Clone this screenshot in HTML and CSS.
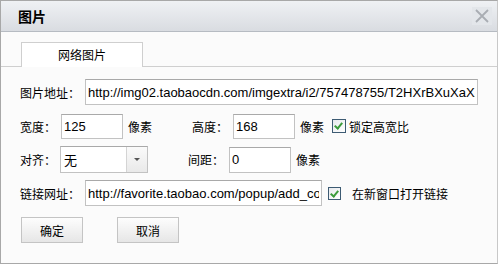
FILE: index.html
```html
<!DOCTYPE html>
<html lang="zh-CN">
<head>
  <meta charset="UTF-8" />
  <title>图片</title>
  <link rel="stylesheet" href="styles.css">
</head>
<body>
  <div class="dialog">
    <div class="titlebar">
      <span class="title">图片</span>
      <span class="close">
        <svg width="16" height="14" viewBox="0 0 16 14">
          <path d="M2 1 L14 13 M14 1 L2 13" stroke="#a9adb3" stroke-width="1.8" fill="none"/>
        </svg>
      </span>
    </div>

    <div class="tabs">
      <div class="tab">网络图片</div>
    </div>

    <div class="form">
      <div class="row row-url">
        <span class="label label-wide">图片地址：</span>
        <input class="input input-url" type="text" value="http://img02.taobaocdn.com/imgextra/i2/757478755/T2HXrBXuXaXXXXXXXX">
      </div>

      <div class="row row-size">
        <span class="label">宽度：</span>
        <input class="input input-num" type="text" value="125">
        <span class="unit">像素</span>
        <span class="label label-right">高度：</span>
        <input class="input input-num" type="text" value="168">
        <span class="unit">像素</span>
        <span class="check check-lock"></span>
        <span class="check-text">锁定高宽比</span>
      </div>

      <div class="row row-align">
        <span class="label">对齐：</span>
        <span class="select">
          <span class="select-value">无</span>
          <span class="select-arrow"></span>
        </span>
        <span class="label label-right">间距：</span>
        <input class="input input-num" type="text" value="0">
        <span class="unit">像素</span>
      </div>

      <div class="row row-link">
        <span class="label label-wide">链接网址：</span>
        <input class="input input-link" type="text" value="http://favorite.taobao.com/popup/add_collection.htm">
        <span class="check check-new"></span>
        <span class="check-text check-text-new">在新窗口打开链接</span>
      </div>

      <div class="row row-buttons">
        <button class="btn">确定</button>
        <button class="btn">取消</button>
      </div>
    </div>
  </div>
</body>
</html>
```

FILE: styles.css
```css
body {
  margin: 0;
  padding: 0;
  background: #fbfbfb;
  font-family: "Noto Sans CJK SC", "Liberation Sans", sans-serif;
  font-size: 12px;
  color: #000;
}

.dialog {
  width: 498px;
  height: 264px;
  box-sizing: border-box;
  border: 1px solid #a8a8a8;
  border-right-color: #c8c8c8;
  background: #fbfbfb;
  overflow: hidden;
}

.titlebar {
  height: 30px;
  display: flex;
  align-items: center;
  justify-content: space-between;
  padding: 0 5px 0 17px;
  background: linear-gradient(to bottom, #eff1f4, #d9dce1);
  border-bottom: 1px solid #b6bbc2;
}

.title {
  font-size: 14px;
  font-weight: bold;
  line-height: 16px;
}

.close {
  width: 20px;
  height: 18px;
  display: flex;
  align-items: center;
  justify-content: center;
  background: #e3e6ea;
}

.tabs {
  padding: 10px 0 0 20px;
  border-bottom: 1px solid #cfcfcf;
  display: flex;
}

.tab {
  width: 120px;
  height: 24px;
  line-height: 23px;
  text-align: center;
  background: #fff;
  border: 1px solid #cfcfcf;
  border-bottom: none;
  margin-bottom: -1px;
}

.form {
  padding: 12px 0 0 19px;
}

.row {
  display: flex;
  align-items: center;
  height: 26px;
}

.row-size {
  margin-top: 8px;
}

.row-align {
  margin-top: 7px;
  height: 27px;
}

.row-link {
  margin-top: 7px;
}

.row-buttons {
  margin-top: 11px;
  gap: 34px;
  padding-left: 1px;
}

.label {
  width: 41px;
  white-space: nowrap;
}

.label-wide {
  width: 65px;
}

.label-right {
  margin-left: 40px;
}

.input {
  box-sizing: border-box;
  height: 26px;
  margin: 0;
  padding: 0 2px;
  background: #fff;
  border: 1px solid #c2c2c2;
  border-top-color: #a9a9a9;
  border-radius: 0;
  outline: none;
  font-family: "Liberation Sans", sans-serif;
  font-size: 13px;
  color: #000;
}

.input-url {
  width: 393px;
}

.input-num {
  width: 62px;
}

.input-link {
  width: 237px;
}

.row-size .input-num {
  height: 25px;
}

.unit {
  margin-left: 5px;
}

.check {
  box-sizing: border-box;
  width: 14px;
  height: 14px;
  border: 1px solid #3d5b73;
  background: linear-gradient(to bottom right, #e6e9ec, #ffffff);
  position: relative;
}

.check::after {
  content: "";
  position: absolute;
  left: 3px;
  top: 1px;
  width: 3px;
  height: 6px;
  border: solid #3b9b3b;
  border-width: 0 2px 2px 0;
  transform: rotate(40deg);
}

.check-lock {
  margin-left: 8px;
}

.check-new {
  width: 13px;
  height: 13px;
  margin-left: 6px;
}

.check-text {
  margin-left: 3px;
}

.check-text-new {
  margin-left: 11px;
}

.select {
  box-sizing: border-box;
  width: 88px;
  height: 27px;
  display: flex;
  background: #fff;
  border: 1px solid #c2c2c2;
  border-top-color: #a9a9a9;
  margin-left: -1px;
}

.select-value {
  flex: 1;
  line-height: 25px;
  padding-left: 3px;
  font-size: 13px;
}

.select-arrow {
  width: 20px;
  border-left: 1px solid #d4d4d4;
  background: linear-gradient(to bottom, #fafafa, #e9e9e9);
  position: relative;
}

.select-arrow::after {
  content: "";
  position: absolute;
  left: 7px;
  top: 11px;
  border: 3px solid transparent;
  border-top: 3px solid #555;
  border-bottom: none;
}

.btn {
  box-sizing: border-box;
  width: 62px;
  height: 26px;
  padding: 0;
  font-family: "Noto Sans CJK SC", sans-serif;
  font-size: 12px;
  color: #000;
  background: linear-gradient(to bottom, #fdfdfd, #e6e6e6);
  border: 1px solid #c4c4c4;
  border-radius: 0;
}
```
